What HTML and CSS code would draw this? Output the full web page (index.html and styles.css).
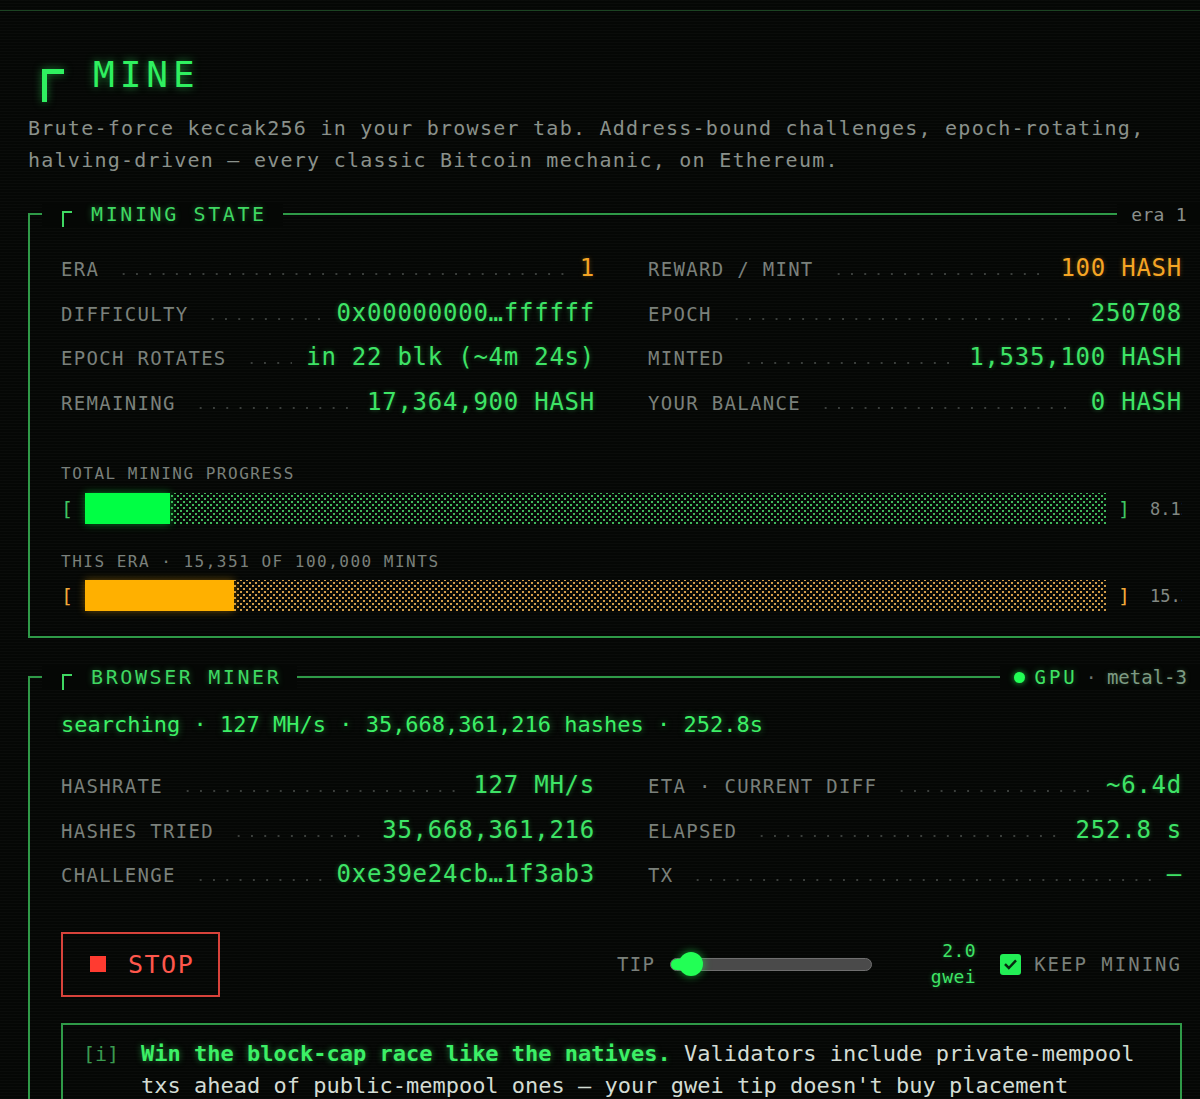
FILE: index.html
```html
<!DOCTYPE html>
<html>
<head>
    <meta charset="utf-8">
    <meta name="viewport" content="width=device-width, initial-scale=1.0">
    <title>MINE</title>
    <link rel="stylesheet" href="styles.css">
</head>
<body>
    <div class="topline"></div>
    <main class="page">
        <header class="hero">
            <h1 class="hero-title"><span class="corner corner-big"></span><span>MINE</span></h1>
            <p class="hero-desc">Brute-force keccak256 in your browser tab. Address-bound challenges, epoch-rotating, halving-driven — every classic Bitcoin mechanic, on Ethereum.</p>
        </header>

        <!-- mining state -->
        <section class="panel panel-state">
            <div class="panel-head">
                <div class="head-title"><span class="corner"></span>MINING STATE</div>
                <div class="head-meta">era 1</div>
            </div>
            <div class="kv-grid">
                <div class="kv"><span class="k">ERA</span><span class="dots"></span><span class="v amber">1</span></div>
                <div class="kv"><span class="k">REWARD / MINT</span><span class="dots"></span><span class="v amber">100 HASH</span></div>
                <div class="kv"><span class="k">DIFFICULTY</span><span class="dots"></span><span class="v">0x00000000…ffffff</span></div>
                <div class="kv"><span class="k">EPOCH</span><span class="dots"></span><span class="v">250708</span></div>
                <div class="kv"><span class="k">EPOCH ROTATES</span><span class="dots"></span><span class="v">in 22 blk (~4m 24s)</span></div>
                <div class="kv"><span class="k">MINTED</span><span class="dots"></span><span class="v">1,535,100 HASH</span></div>
                <div class="kv"><span class="k">REMAINING</span><span class="dots"></span><span class="v">17,364,900 HASH</span></div>
                <div class="kv"><span class="k">YOUR BALANCE</span><span class="dots"></span><span class="v">0 HASH</span></div>
            </div>

            <div class="progress">
                <div class="progress-label">TOTAL MINING PROGRESS</div>
                <div class="bar-row">
                    <span class="brk">[</span>
                    <div class="bar"><div class="bar-fill" style="width: 8.3%"></div></div>
                    <span class="brk">]</span>
                    <span class="pct">8.12%</span>
                </div>
            </div>
            <div class="progress progress-era">
                <div class="progress-label">THIS ERA · 15,351 OF 100,000 MINTS</div>
                <div class="bar-row">
                    <span class="brk">[</span>
                    <div class="bar"><div class="bar-fill" style="width: 14.6%"></div></div>
                    <span class="brk">]</span>
                    <span class="pct">15.35%</span>
                </div>
            </div>
        </section>

        <!-- browser miner -->
        <section class="panel panel-miner">
            <div class="panel-head">
                <div class="head-title"><span class="corner"></span>BROWSER MINER</div>
                <div class="head-meta"><span class="live-dot"></span><span class="gpu">GPU</span><span class="sep">·</span><span class="device">metal-3</span></div>
            </div>
            <div class="status">searching · 127 MH/s · 35,668,361,216 hashes · 252.8s</div>
            <div class="kv-grid">
                <div class="kv"><span class="k">HASHRATE</span><span class="dots"></span><span class="v">127 MH/s</span></div>
                <div class="kv"><span class="k">ETA · CURRENT DIFF</span><span class="dots"></span><span class="v">~6.4d</span></div>
                <div class="kv"><span class="k">HASHES TRIED</span><span class="dots"></span><span class="v">35,668,361,216</span></div>
                <div class="kv"><span class="k">ELAPSED</span><span class="dots"></span><span class="v">252.8 s</span></div>
                <div class="kv"><span class="k">CHALLENGE</span><span class="dots"></span><span class="v">0xe39e24cb…1f3ab3</span></div>
                <div class="kv"><span class="k">TX</span><span class="dots"></span><span class="v">—</span></div>
            </div>

            <div class="controls">
                <button class="stop-btn"><span class="stop-sq"></span>STOP</button>
                <div class="ctl-right">
                    <span class="ctl-label">TIP</span>
                    <div class="slider">
                        <div class="slider-fill"></div>
                        <div class="slider-thumb"></div>
                    </div>
                    <div class="tip-val"><span>2.0</span><span>gwei</span></div>
                    <label class="keep">
                        <span class="check">
                            <svg width="15" height="15" viewBox="0 0 16 16">
                                <path d="M3 8.5l3.2 3.2L13 4.5" fill="none" stroke="#062a10" stroke-width="2.6" stroke-linecap="square"/>
                            </svg>
                        </span>
                        <span class="ctl-label">KEEP MINING</span>
                    </label>
                </div>
            </div>

            <div class="info">
                <span class="info-tag">[i]</span>
                <p class="info-text"><b>Win the block-cap race like the natives.</b> Validators include private-mempool txs ahead of public-mempool ones — your gwei tip doesn't buy placement inside a capped block.</p>
            </div>
        </section>
    </main>
</body>
</html>
```

FILE: styles.css
```css
body {
    margin: 0;
    height: 1099px;
    overflow: hidden;
    background-color: #050705;
    background-image: repeating-linear-gradient(to bottom, rgba(255, 255, 255, 0.018) 0, rgba(255, 255, 255, 0.018) 1px, transparent 1px, transparent 3px);
    color: #848a85;
    font-family: "DejaVu Sans Mono", "Liberation Mono", monospace;
}

.topline {
    height: 10px;
    border-bottom: 1px solid #1c4423;
}

.page {
    width: 1186px;
    padding-left: 28px;
}

/* hero */

.hero-title {
    margin: 42px 0 0;
    height: 43px;
    display: flex;
    align-items: flex-start;
    font-size: 36px;
    line-height: 43px;
    font-weight: normal;
    letter-spacing: 5px;
    color: #2ff060;
    text-shadow: 0 0 8px rgba(47, 240, 96, 0.55);
}

.corner {
    display: inline-block;
    width: 8px;
    height: 14px;
    border-top: 2.5px solid #3fd862;
    border-left: 2.5px solid #3fd862;
}

.corner-big {
    flex: none;
    width: 17px;
    height: 28px;
    margin: 16px 29px 0 14px;
    border-top-width: 5px;
    border-left-width: 5px;
    border-color: #2ff060;
    filter: drop-shadow(0 0 4px rgba(47, 240, 96, 0.5));
}

.hero-desc {
    margin: 16px 0 0;
    font-size: 20px;
    line-height: 32px;
    letter-spacing: 1.25px;
    color: #8a918b;
}

/* panels */

.panel {
    margin-top: 37px;
    border: 2px solid #2f9a48;
    padding: 0 30px 0 31px;
}

.panel-miner {
    margin-top: 38px;
}

.panel-head {
    display: flex;
    justify-content: space-between;
    align-items: center;
    height: 22px;
    margin: -12px -40px 0 -19px;
}

.head-title {
    display: flex;
    align-items: center;
    background: #050705;
    padding: 0 16px 0 20px;
    font-size: 20px;
    letter-spacing: 2.6px;
    color: #3fd862;
    text-shadow: 0 0 6px rgba(63, 216, 98, 0.45);
}

.head-title .corner {
    margin: 9px 19px 0 0;
}

.head-meta {
    display: flex;
    align-items: center;
    background: #050705;
    padding: 0 35px 0 14px;
    font-size: 18px;
    letter-spacing: 0.3px;
    color: #8a8f8b;
}

.live-dot {
    width: 11px;
    height: 11px;
    border-radius: 50%;
    background: #22ff55;
    box-shadow: 0 0 6px rgba(34, 255, 85, 0.7);
    margin-right: 9px;
}

.gpu {
    font-size: 19px;
    letter-spacing: 3px;
    color: #3fe464;
    text-shadow: 0 0 6px rgba(63, 228, 100, 0.45);
}

.sep {
    margin: 0 10px 0 8px;
    color: #6d736e;
}

.device {
    font-size: 19px;
    letter-spacing: 0;
    color: #7c9a82;
    text-shadow: 0 0 5px rgba(110, 180, 120, 0.35);
}

/* key / value rows */

.kv-grid {
    display: grid;
    grid-template-columns: 1fr 1fr;
    column-gap: 53px;
    margin-top: 21px;
}

.kv {
    display: flex;
    align-items: baseline;
    height: 44.5px;
    line-height: 44.5px;
    white-space: nowrap;
}

.k {
    font-size: 19px;
    letter-spacing: 1.3px;
    color: #7a807b;
}

.dots {
    flex: 1;
    height: 4px;
    margin: 0 14px;
    background-image: radial-gradient(circle, #3b3f3c 1px, transparent 1.5px);
    background-size: 13.3px 4px;
    background-repeat: repeat-x;
    background-position: 4px 100%;
}

.v {
    font-size: 24px;
    letter-spacing: 0.75px;
    color: #3ee466;
    text-shadow: 0 0 5px rgba(62, 228, 102, 0.35);
}

.v.amber {
    color: #f5a524;
    text-shadow: 0 0 5px rgba(245, 165, 36, 0.35);
}

/* progress */

.progress {
    margin-top: 40px;
}

.progress-era {
    margin-top: 28px;
    padding-bottom: 25px;
}

.progress-label {
    font-size: 16px;
    line-height: 20px;
    letter-spacing: 1.5px;
    color: #7a807b;
}

.bar-row {
    display: flex;
    align-items: center;
    margin-top: 9px;
    height: 31px;
}

.progress-era .bar-row {
    margin-top: 8px;
}

.brk {
    width: 12px;
    font-size: 20px;
    color: #3fc862;
}

.bar {
    flex: 1;
    height: 31px;
    margin: 0 12px;
    display: flex;
    background-image: radial-gradient(circle, rgba(70, 200, 100, 0.9) 0.9px, transparent 1.4px), radial-gradient(circle, rgba(70, 200, 100, 0.9) 0.9px, transparent 1.4px);
    background-size: 6px 6px;
    background-position: 0 0, 3px 3px;
}

.bar-fill {
    height: 100%;
    background: #00ff44;
    box-shadow: 0 0 8px rgba(0, 255, 68, 0.45);
}

.progress-era .brk {
    color: #f2a93a;
}

.progress-era .bar {
    background-image: radial-gradient(circle, rgba(230, 170, 80, 0.9) 0.9px, transparent 1.4px), radial-gradient(circle, rgba(230, 170, 80, 0.9) 0.9px, transparent 1.4px);
}

.progress-era .bar-fill {
    background: #ffb000;
    box-shadow: 0 0 8px rgba(255, 176, 0, 0.4);
}

.pct {
    width: 32px;
    margin-left: 20px;
    overflow: hidden;
    white-space: nowrap;
    font-size: 17px;
    color: #818782;
}

/* miner */

.status {
    margin-top: 22px;
    font-size: 22px;
    line-height: 30px;
    color: #3cf066;
    text-shadow: 0 0 7px rgba(60, 240, 102, 0.5);
}

.panel-miner .kv-grid {
    margin-top: 23px;
}

.controls {
    display: flex;
    justify-content: space-between;
    align-items: center;
    margin-top: 35px;
}

.stop-btn {
    display: flex;
    align-items: center;
    gap: 22px;
    width: 159px;
    height: 65px;
    padding: 0 0 0 27px;
    background: transparent;
    border: 2px solid #d8433b;
    font-family: inherit;
    font-size: 25px;
    letter-spacing: 1.5px;
    color: #ff574c;
    cursor: pointer;
}

.stop-sq {
    width: 16px;
    height: 16px;
    background: #ff3b30;
}

.ctl-right {
    display: flex;
    align-items: center;
}

.ctl-label {
    font-size: 19px;
    letter-spacing: 1.3px;
    color: #7a807b;
}

.slider {
    position: relative;
    width: 200px;
    height: 11px;
    margin-left: 15px;
    border: 1px solid #6f6f6f;
    border-radius: 7px;
    background: #4a4a4a;
}

.slider-fill {
    position: absolute;
    left: 0;
    top: 0;
    bottom: 0;
    width: 22px;
    border-radius: 6px 0 0 6px;
    background: #22ff55;
}

.slider-thumb {
    position: absolute;
    left: 8px;
    top: -7px;
    width: 24px;
    height: 24px;
    border-radius: 50%;
    background: #22ff55;
    box-shadow: 0 0 8px rgba(34, 255, 85, 0.6);
}

.tip-val {
    display: flex;
    flex-direction: column;
    align-items: flex-end;
    width: 46px;
    margin-left: 58px;
    font-size: 18px;
    line-height: 26px;
    letter-spacing: 0.5px;
    color: #3ee466;
    text-shadow: 0 0 5px rgba(62, 228, 102, 0.4);
}

.keep {
    display: flex;
    align-items: center;
    margin-left: 24px;
}

.keep .ctl-label {
    margin-left: 13px;
    letter-spacing: 2px;
}

.check {
    display: flex;
    align-items: center;
    justify-content: center;
    width: 21px;
    height: 21px;
    border-radius: 3px;
    background: #22ee55;
}

.info {
    display: flex;
    margin-top: 26px;
    border: 2px solid #2f9a48;
    padding: 13px 20px 20px;
}

.info-tag {
    flex: none;
    width: 58px;
    font-size: 20px;
    line-height: 32px;
    color: #3a9a50;
}

.info-text {
    margin: 0;
    font-size: 22px;
    line-height: 32px;
    color: #d3dcd4;
}

.info-text b {
    color: #3cf066;
    text-shadow: 0 0 6px rgba(60, 240, 102, 0.5);
}
```
